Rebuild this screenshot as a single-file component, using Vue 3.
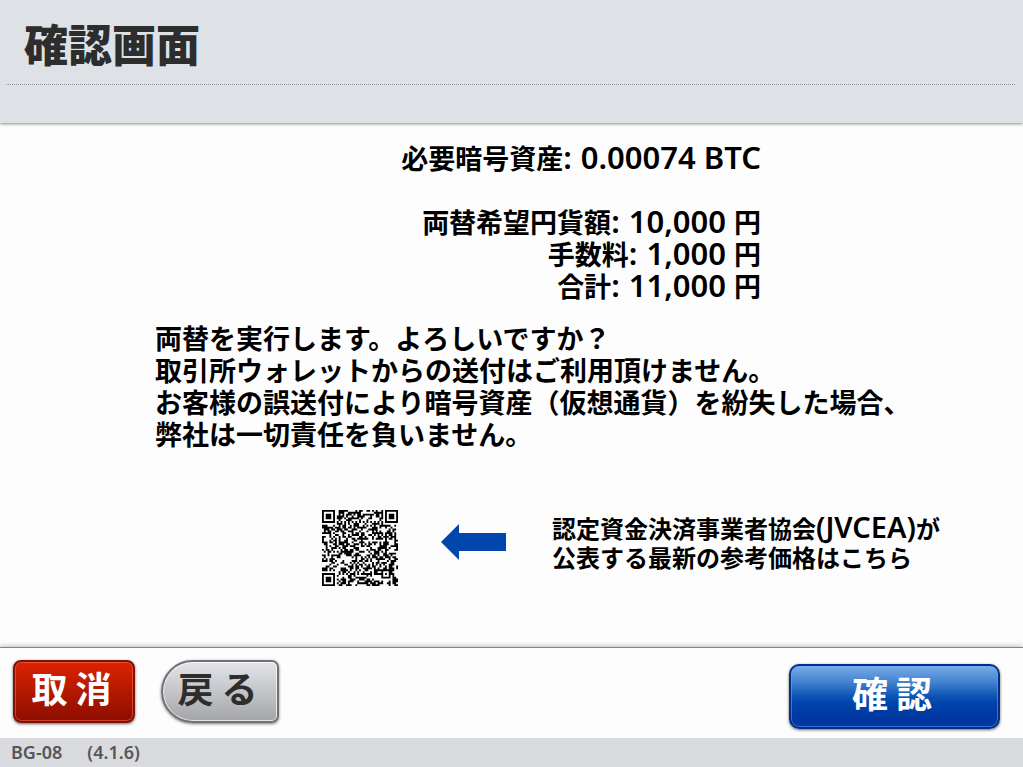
<script setup>
const rows = [
  { label: '必要暗号資産', value: '0.00074 BTC', unit: '', spaced: true },
  { label: '両替希望円貨額', value: '10,000', unit: '円' },
  { label: '手数料', value: '1,000', unit: '円' },
  { label: '合計', value: '11,000', unit: '円' }
]

const notice = [
  '両替を実行します。よろしいですか？',
  '取引所ウォレットからの送付はご利用頂けません。',
  'お客様の誤送付により暗号資産（仮想通貨）を紛失した場合、',
  '弊社は一切責任を負いません。'
]

const size = 41

function ring(x, y, cx, cy, reach) {
  const d = Math.max(Math.abs(x - cx), Math.abs(y - cy))
  return d > reach ? null : d
}

function buildCode() {
  let seed = 20741
  let path = ''
  for (let y = 0; y < size; y++) {
    for (let x = 0; x < size; x++) {
      seed = (seed * 1103515245 + 12345) % 2147483648
      let dark = seed / 2147483648 < 0.52
      if (x === 6 || y === 6) dark = (x + y) % 2 === 0
      for (const [cx, cy] of [[3, 3], [size - 4, 3], [3, size - 4]]) {
        const d = ring(x, y, cx, cy, 4)
        if (d !== null) dark = d !== 2 && d !== 4
      }
      const a = ring(x, y, size - 7, size - 7, 2)
      if (a !== null) dark = a !== 1
      if (dark) path += `M${x} ${y}h1v1h-1z`
    }
  }
  return path
}

const codePath = buildCode()
</script>

<template>
  <div class="screen">
    <header class="top">
      <h1>確認画面</h1>
    </header>

    <main class="body">
      <dl class="summary">
        <div v-for="row in rows" :key="row.label" class="row" :class="{ spaced: row.spaced }">
          <dt>{{ row.label }}<span class="latin">:</span></dt>
          <dd><span class="latin">{{ row.value }}</span><span v-if="row.unit" class="unit">{{ row.unit }}</span></dd>
        </div>
      </dl>

      <p class="notice">
        <span v-for="line in notice" :key="line">{{ line }}</span>
      </p>

      <section class="reference">
        <svg class="code" :viewBox="`0 0 ${size} ${size}`" role="img" aria-label="QR">
          <path :d="codePath" fill="#000" />
        </svg>
        <svg class="arrow" viewBox="0 0 65 36" aria-hidden="true">
          <path d="M0 18L18 0V9H65V27H18V36Z" fill="#0046ad" />
        </svg>
        <p class="source">
          <span>認定資金決済事業者協会<span class="latin">(JVCEA)</span>が</span>
          <span>公表する最新の参考価格はこちら</span>
        </p>
      </section>
    </main>

    <nav class="actions">
      <button type="button" class="cancel">取 消</button>
      <button type="button" class="back">戻 る</button>
      <button type="button" class="confirm">確 認</button>
    </nav>

    <footer class="status">
      <span>BG-08</span>
      <span>(4.1.6)</span>
    </footer>
  </div>
</template>

<style>
body {
  margin: 0;
  background: #fdfdfd;
}
</style>

<style scoped>
.screen {
  display: flex;
  flex-direction: column;
  min-height: 100vh;
  color: #000;
  font-family: "Noto Sans CJK JP", sans-serif;
  font-weight: 700;
  background: #fdfdfd;
}

.top {
  box-sizing: border-box;
  height: 123px;
  padding: 0 8px 0 6px;
  background: #dee1e6;
  box-shadow: 0 1px 3px rgba(0, 0, 0, 0.45);
}

h1 {
  margin: 0;
  height: 84px;
  padding-left: 18px;
  border-bottom: 1px dotted #8f9297;
  color: #2d2d2d;
  font-size: 44px;
  font-weight: 900;
  line-height: 86px;
}

.body {
  flex: 1;
  white-space: nowrap;
}

.summary {
  margin: 0;
  padding: 18px 262px 0 0;
  font-size: 27px;
  line-height: 32px;
}

.row {
  display: flex;
  justify-content: flex-end;
  gap: 9px;
  height: 32px;
}

.spaced {
  margin-bottom: 32px;
}

dt,
dd {
  margin: 0;
}

.latin {
  font-family: "Noto Sans", "Open Sans", sans-serif;
  font-weight: 600;
}

.summary .latin {
  font-size: 31px;
}

.unit {
  margin-left: 8px;
}

.notice {
  display: flex;
  flex-direction: column;
  margin: 21px 0 0 155px;
  font-size: 27px;
  line-height: 32px;
}

.reference {
  display: flex;
  margin: 60px 0 0 322px;
}

.code {
  width: 76px;
  height: 76px;
}

.arrow {
  width: 65px;
  height: 36px;
  margin: 14px 46px 0 43px;
}

.source {
  display: flex;
  flex-direction: column;
  margin: 3px 0 0;
  font-size: 24px;
  line-height: 29px;
}

.source .latin {
  font-size: 29px;
  line-height: 24px;
}

.actions {
  box-sizing: border-box;
  display: flex;
  align-items: flex-start;
  height: 91px;
  padding: 12px 23px 0 13px;
  border-top: 1px solid #858585;
  background: #fdfdfd;
  box-shadow: 0 -1px 5px rgba(0, 0, 0, 0.25);
}

button {
  box-sizing: border-box;
  height: 63px;
  padding: 0 5px 10px 0;
  font: inherit;
  font-size: 36px;
  line-height: 48px;
}

.cancel {
  width: 122px;
  border: 2px solid #7d1207;
  border-radius: 8px;
  color: #fff;
  background: linear-gradient(#dc2300, #8c0d00);
  box-shadow: inset 0 0 0 1px rgba(255, 120, 90, 0.5), 0 1px 3px rgba(0, 0, 0, 0.6);
}

.back {
  width: 118px;
  margin-left: 26px;
  border: 2px solid #707276;
  border-radius: 32px 7px 7px 32px;
  color: #2d2d2d;
  background: linear-gradient(#e4e5e9, #a4a5a8);
  box-shadow: inset 0 0 0 1px rgba(255, 255, 255, 0.7), 0 1px 3px rgba(0, 0, 0, 0.5);
}

.confirm {
  width: 211px;
  height: 65px;
  margin: 4px 0 0 auto;
  border: 2px solid #022f87;
  border-radius: 10px;
  color: #fff;
  background: linear-gradient(#7aace8 0%, #3f7fce 28%, #0c53b4 50%, #0045ac 60%, #0037a0 82%, #0037a0 100%);
  box-shadow: inset 0 0 0 1px rgba(120, 170, 240, 0.5), 0 1px 3px rgba(0, 0, 0, 0.6);
}

.status {
  display: flex;
  gap: 25px;
  height: 29px;
  padding-left: 11px;
  color: #55565a;
  background: #dadbdf;
  font-family: "Noto Sans", "Open Sans", sans-serif;
  font-size: 18px;
  font-weight: 600;
  line-height: 29px;
}
</style>
